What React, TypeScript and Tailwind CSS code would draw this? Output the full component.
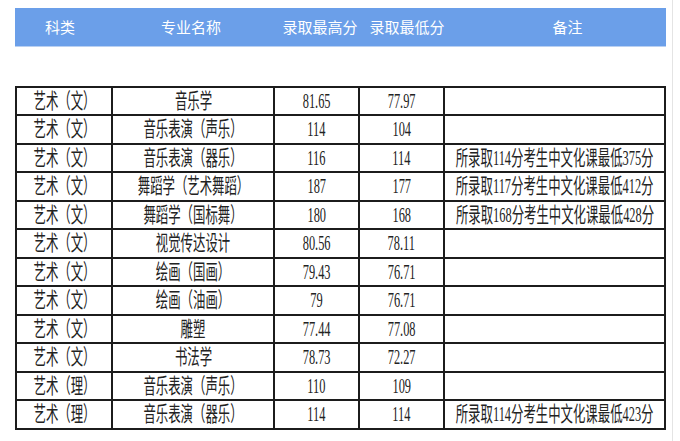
import React from 'react';

interface Row {
  kind: string;
  major: string;
  high: string;
  low: string;
  note: string;
}

const rows: Row[] = [
  { kind: '艺术（文）', major: '音乐学', high: '81.65', low: '77.97', note: '' },
  { kind: '艺术（文）', major: '音乐表演（声乐）', high: '114', low: '104', note: '' },
  { kind: '艺术（文）', major: '音乐表演（器乐）', high: '116', low: '114', note: '所录取114分考生中文化课最低375分' },
  { kind: '艺术（文）', major: '舞蹈学（艺术舞蹈）', high: '187', low: '177', note: '所录取117分考生中文化课最低412分' },
  { kind: '艺术（文）', major: '舞蹈学（国标舞）', high: '180', low: '168', note: '所录取168分考生中文化课最低428分' },
  { kind: '艺术（文）', major: '视觉传达设计', high: '80.56', low: '78.11', note: '' },
  { kind: '艺术（文）', major: '绘画（国画）', high: '79.43', low: '76.71', note: '' },
  { kind: '艺术（文）', major: '绘画（油画）', high: '79', low: '76.71', note: '' },
  { kind: '艺术（文）', major: '雕塑', high: '77.44', low: '77.08', note: '' },
  { kind: '艺术（文）', major: '书法学', high: '78.73', low: '72.27', note: '' },
  { kind: '艺术（理）', major: '音乐表演（声乐）', high: '110', low: '109', note: '' },
  { kind: '艺术（理）', major: '音乐表演（器乐）', high: '114', low: '114', note: '所录取114分考生中文化课最低423分' },
];

const Cell: React.FC<{ text: string; last?: boolean }> = ({ text, last }) => (
  <div className={`min-w-0 flex items-center justify-center border-b-2 border-[#1c1c1c] ${last ? '' : 'border-r-2'}`}>
    <span className="inline-block shrink-0 whitespace-nowrap scale-x-[0.59] text-[21px] leading-none text-[#222]">{text}</span>
  </div>
);

export default function App() {
  return (
    <div className="relative w-[680px] h-[441px] bg-white overflow-hidden pt-2 pl-[15px]" style={{ fontFamily: '"Liberation Serif", "Noto Sans CJK SC", serif' }}>
      <div className="absolute right-[7px] top-0 h-full w-px bg-[#e4e4e4]" />
      <div
        className="flex w-[651px] h-[39px] items-center bg-[#6b9fe9] border-b border-[#b9d0f2] text-white text-[15px]"
        style={{ fontFamily: '"Noto Sans CJK SC", "Noto Sans", sans-serif' }}
      >
        <div className="w-[90px] text-center">科类</div>
        <div className="w-[172px] text-center">专业名称</div>
        <div className="w-[86px] text-center">录取最高分</div>
        <div className="w-[88px] text-center">录取最低分</div>
        <div className="flex-1 text-center pl-[18px]">备注</div>
      </div>

      <div className="mt-[39px] w-[651px] border-t-2 border-l-2 border-r-2 border-[#1c1c1c]">
        {rows.map((r, i) => (
          <div
            key={i}
            className={`grid grid-cols-[96px_162px_85px_85px_219px] ${i % 2 === 0 ? 'h-[28px]' : 'h-[29px]'}`}
          >
            <Cell text={r.kind} />
            <Cell text={r.major} />
            <Cell text={r.high} />
            <Cell text={r.low} />
            <Cell text={r.note} last />
          </div>
        ))}
      </div>
    </div>
  );
}
